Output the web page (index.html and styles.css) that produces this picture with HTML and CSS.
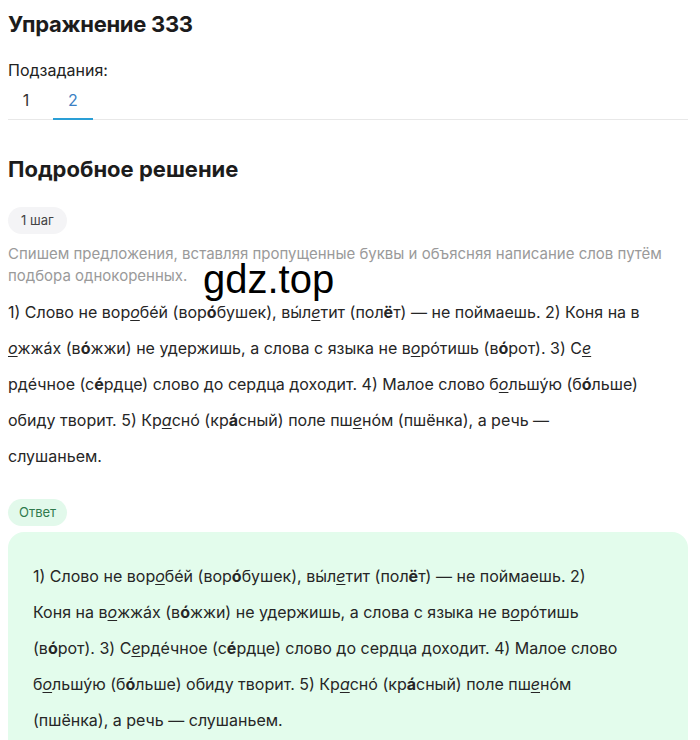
FILE: index.html
```html
<!DOCTYPE html>
<html lang="ru">
<head>
<meta charset="utf-8">
<title>Упражнение 333</title>
<link rel="stylesheet" href="styles.css">
</head>
<body>
<main class="page">
  <h1 class="title">Упражнение 333</h1>
  <div class="subtasks">
    <div class="subtasks-label">Подзадания:</div>
    <nav class="tabs">
      <span class="tab tab-first">1</span>
      <span class="tab tab-active">2</span>
    </nav>
  </div>

  <h2 class="section-title">Подробное решение</h2>

  <section class="step">
    <span class="pill pill-step">1 шаг</span>
    <p class="hint">Спишем предложения, вставляя пропущенные буквы и объясняя написание слов путём подбора однокоренных.</p>
    <p class="text">
      <span class="line">1) Слово не вор<em class="miss">о</em>бе́й (вор<b>о́</b>бушек), вы́л<em class="miss">е</em>тит (пол<b>ё</b>т) — не поймаешь. 2) Коня на в</span>
      <span class="line"><em class="miss">о</em>жжа́х (в<b>о́</b>жжи) не удержишь, а слова с языка не в<em class="miss">о</em>ро́тишь (в<b>о́</b>рот). 3) С<em class="miss">е</em></span>
      <span class="line">рде́чное (с<b>е́</b>рдце) слово до сердца доходит. 4) Малое слово б<em class="miss">о</em>льшу́ю (б<b>о́</b>льше)</span>
      <span class="line">обиду творит. 5) Кр<em class="miss">а</em>сно́ (кр<b>а́</b>сный) поле пш<em class="miss">е</em>но́м (пшёнка), а речь —</span>
      <span class="line">слушаньем.</span>
    </p>
    <div class="watermark">gdz.top</div>
  </section>

  <section class="answer">
    <span class="pill pill-answer">Ответ</span>
    <div class="answer-box">
      <span class="line">1) Слово не вор<em class="miss">о</em>бе́й (вор<b>о́</b>бушек), вы́л<em class="miss">е</em>тит (пол<b>ё</b>т) — не поймаешь. 2)</span>
      <span class="line">Коня на в<em class="miss">о</em>жжа́х (в<b>о́</b>жжи) не удержишь, а слова с языка не в<em class="miss">о</em>ро́тишь</span>
      <span class="line">(в<b>о́</b>рот). 3) С<em class="miss">е</em>рде́чное (с<b>е́</b>рдце) слово до сердца доходит. 4) Малое слово</span>
      <span class="line">б<em class="miss">о</em>льшу́ю (б<b>о́</b>льше) обиду творит. 5) Кр<em class="miss">а</em>сно́ (кр<b>а́</b>сный) поле пш<em class="miss">е</em>но́м</span>
      <span class="line">(пшёнка), а речь — слушаньем.</span>
    </div>
  </section>
</main>
</body>
</html>
```

FILE: styles.css
```css
* { box-sizing: border-box; }

html, body { margin: 0; padding: 0; background: #fff; }

body {
  font-family: Inter, Roboto, "Noto Sans", sans-serif;
  color: #262626;
}

.page {
  width: 680px;
  margin-left: 8px;
  padding-top: 10px;
}

.title {
  margin: 0;
  font-size: 22px;
  line-height: 28px;
  font-weight: 700;
  letter-spacing: -0.3px;
  color: #1c1c1c;
}

.subtasks { margin-top: 22px; }

.subtasks-label {
  font-size: 16px;
  line-height: 20px;
  color: #222;
}

.tabs {
  display: flex;
  gap: 9px;
  margin-top: 10px;
  border-bottom: 1px solid #e8e8e8;
}

.tab {
  width: 40px;
  text-align: center;
  font-size: 16px;
  line-height: 20px;
  padding-bottom: 8px;
  color: #333;
  border-bottom: 2px solid transparent;
  margin-bottom: -1px;
}

.tab-first { width: 36px; }

.tab-active {
  color: #3b7fc4;
  border-bottom-color: #2a9fd6;
}

.section-title {
  margin: 35px 0 0;
  font-size: 22px;
  line-height: 28px;
  font-weight: 700;
  color: #1c1c1c;
}

.step {
  position: relative;
  margin-top: 24px;
}

.pill {
  display: inline-block;
  vertical-align: top;
  border-radius: 14px;
  font-size: 13px;
  line-height: 27px;
  height: 27px;
  padding: 0 12px;
}

.pill-step {
  background: #f4f4f6;
  color: #444;
  padding: 0 13px;
}

.hint {
  margin: 9px 0 0;
  font-size: 15px;
  line-height: 22px;
  color: #9a9a9a;
}

.text {
  margin: 7px 0 0;
  font-size: 16px;
  line-height: 36px;
  color: #262626;
}

.line {
  display: block;
  white-space: nowrap;
}

.miss {
  font-style: italic;
  text-decoration: underline;
  text-underline-offset: 2px;
  text-decoration-thickness: 1px;
}

b { font-weight: 700; }

.watermark {
  position: absolute;
  left: 195px;
  top: 52px;
  font-family: "Liberation Sans", Arial, sans-serif;
  font-size: 40px;
  line-height: 40px;
  color: #000;
}

.answer { margin-top: 25px; }

.pill-answer {
  background: #e2f9eb;
  color: #2f7a4d;
  padding: 0 11px;
}

.answer-box {
  margin-top: 6px;
  background: #e3fcec;
  border-radius: 16px;
  padding: 26px 25px 20px;
  font-size: 16px;
  line-height: 36px;
  color: #262626;
}
```
